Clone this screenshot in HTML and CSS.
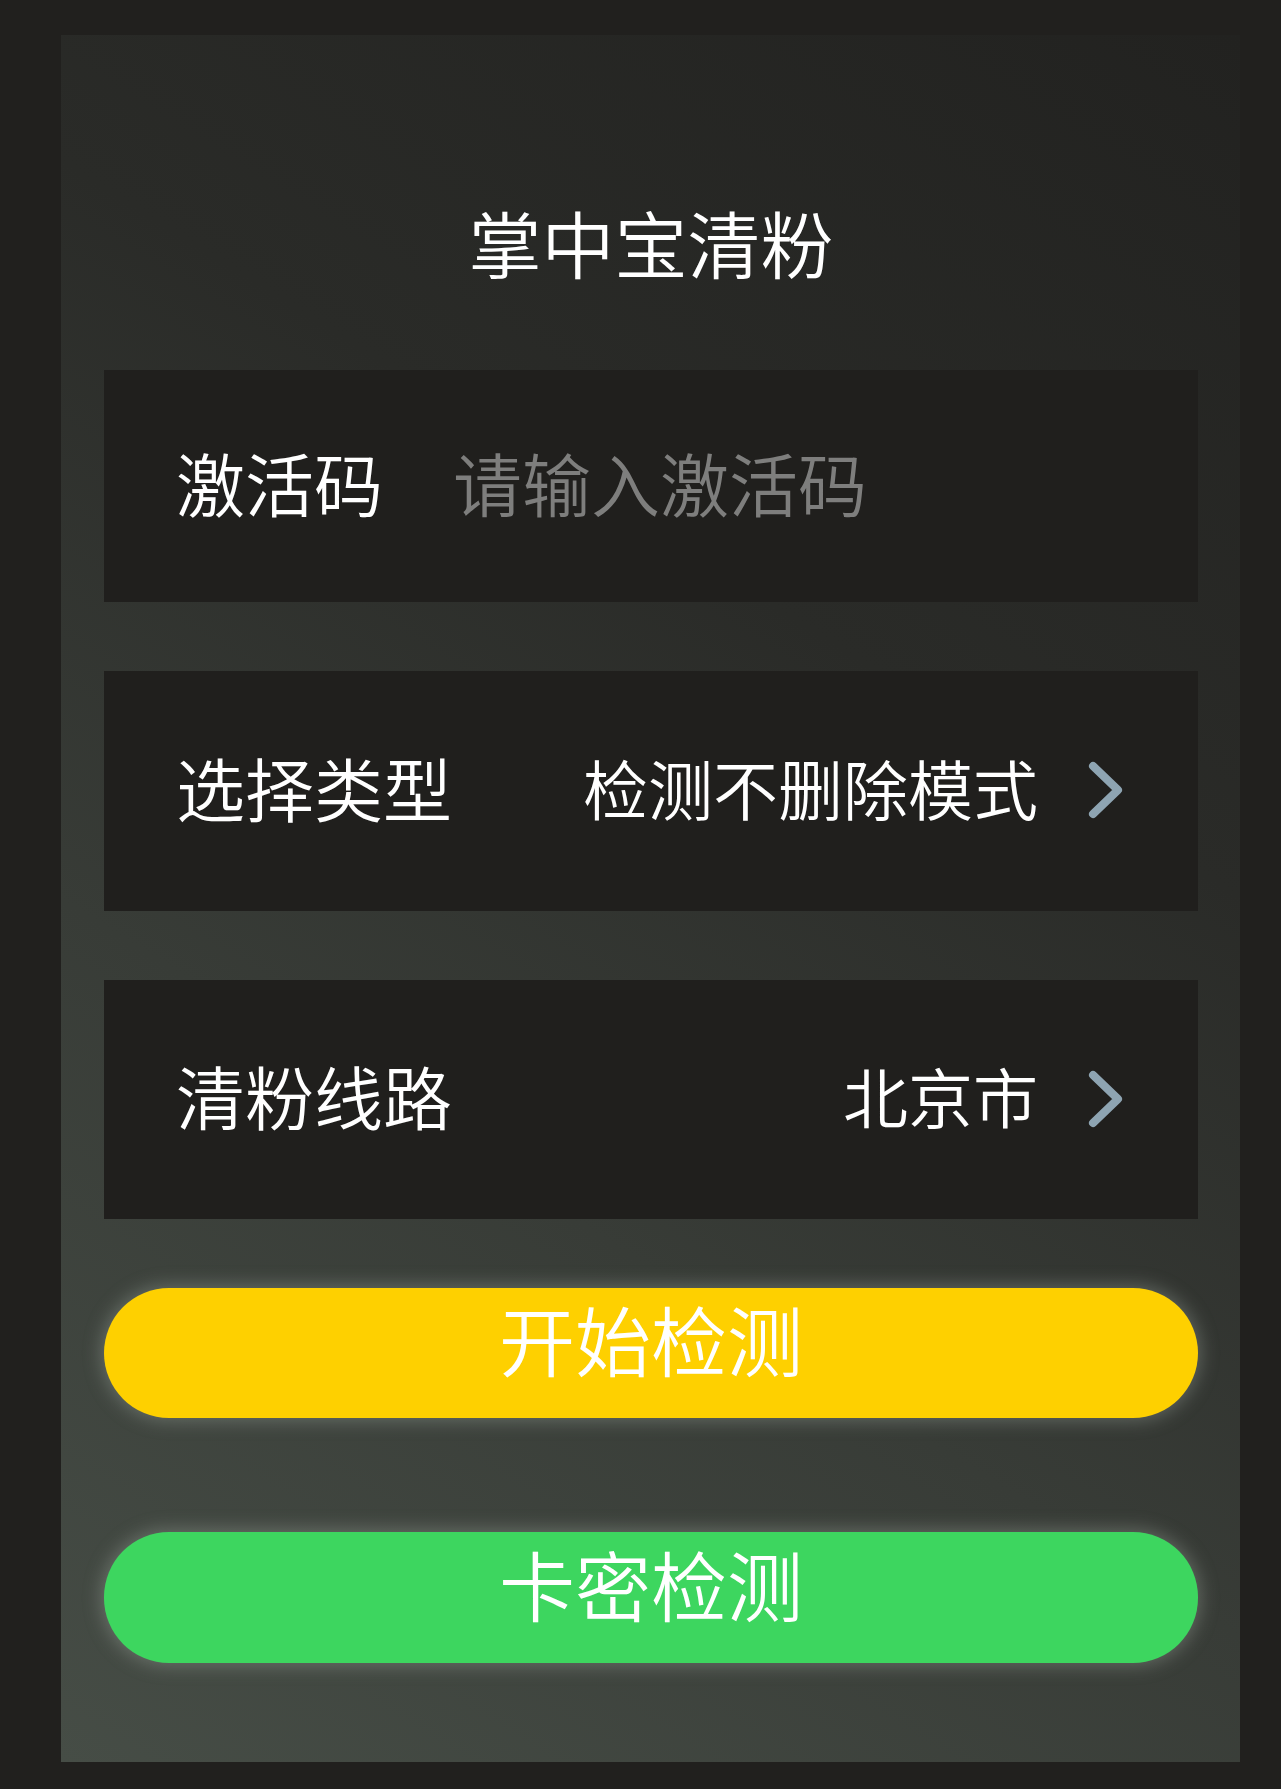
FILE: index.html
```html
<!DOCTYPE html>
<html lang="zh-CN">
<head>
<meta charset="utf-8">
<title>掌中宝清粉</title>
<link rel="stylesheet" href="styles.css">
</head>
<body>
<main class="panel">
  <h1 class="title">掌中宝清粉</h1>
  <div class="field field-code">
    <label class="label" for="code">激活码</label>
    <input id="code" class="input" type="text" placeholder="请输入激活码">
  </div>
  <div class="field field-select">
    <span class="label">选择类型</span>
    <span class="value">检测不删除模式</span>
    <svg class="chev" width="50" height="60" viewBox="0 0 50 60" aria-hidden="true">
      <polyline points="13,5 38,29 13,53" fill="none" stroke="#8ea4b2" stroke-width="8" stroke-linecap="round" stroke-linejoin="round"/>
    </svg>
  </div>
  <div class="field field-select">
    <span class="label">清粉线路</span>
    <span class="value">北京市</span>
    <svg class="chev" width="50" height="60" viewBox="0 0 50 60" aria-hidden="true">
      <polyline points="13,5 38,29 13,53" fill="none" stroke="#8ea4b2" stroke-width="8" stroke-linecap="round" stroke-linejoin="round"/>
    </svg>
  </div>
  <button class="btn btn-start" type="button">开始检测</button>
  <button class="btn btn-card" type="button">卡密检测</button>
</main>
</body>
</html>
```

FILE: styles.css
```css
* { box-sizing: border-box; }

html, body {
  margin: 0;
  padding: 0;
  background: #21201e;
}

body {
  font-family: "Noto Sans CJK SC", "Noto Sans", sans-serif;
  font-weight: 350;
  color: #ffffff;
  padding: 35px 41px 27px 61px;
  min-height: 1789px;
}

.panel {
  height: 1727px;
  background: linear-gradient(32deg, #464d46 0%, #383c37 35%, #2a2b28 65%, #222220 100%);
  padding: 0 42px 0 43px;
  display: flex;
  flex-direction: column;
}

.title {
  margin: 169px 0 92px;
  height: 74px;
  line-height: 74px;
  font-size: 73px;
  font-weight: 350;
  text-align: center;
}

.field {
  background: #201f1d;
  display: flex;
  align-items: center;
  padding: 0 68px 8px 72px;
}

.field-code {
  height: 232px;
  margin-bottom: 69px;
}

.field-select {
  height: 240px;
  margin-bottom: 69px;
}

.field-select + .field-select {
  height: 239px;
}

.label {
  font-size: 69px;
  line-height: 1;
  color: #ffffff;
  white-space: nowrap;
}

.input {
  margin-left: 70px;
  flex: 1;
  min-width: 0;
  background: transparent;
  border: 0;
  outline: none;
  padding: 0;
  font-family: "Noto Sans CJK SC", "Noto Sans", sans-serif;
  font-weight: 350;
  font-size: 69px;
  line-height: 1;
  color: #ffffff;
}

.input::placeholder {
  color: #7e7e7d;
}

.value {
  margin-left: auto;
  font-size: 65px;
  line-height: 1;
  color: #ffffff;
  white-space: nowrap;
}

.chev {
  display: block;
  margin-left: 42px;
  margin-bottom: -8px;
  flex: none;
}

.btn {
  display: block;
  width: 100%;
  height: 130px;
  border: 0;
  border-radius: 65px;
  font-family: "Noto Sans CJK SC", "Noto Sans", sans-serif;
  font-weight: 350;
  font-size: 76px;
  line-height: 1;
  color: #ffffff;
  padding: 0 0 30px;
  box-shadow: 0 0 18px 3px rgba(175, 185, 175, 0.35);
  cursor: pointer;
}

.btn-start {
  background: #fed000;
}

.btn-card {
  background: #3dd65f;
  margin-top: 114px;
  height: 131px;
}
```
